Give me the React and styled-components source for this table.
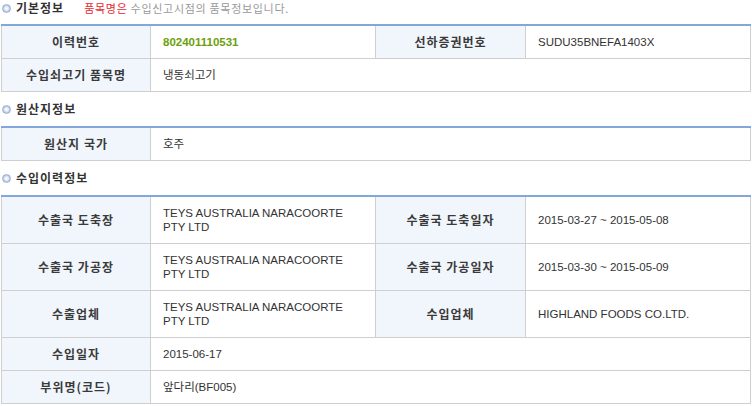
import styled, { createGlobalStyle } from "styled-components";

const GlobalStyle = createGlobalStyle`
  body {
    margin: 0;
    background: #fff;
    font-family: "Noto Sans CJK KR", "Liberation Sans", sans-serif;
    color: #333;
  }
`;

const Page = styled.div`
  width: 752px;
  padding-left: 1px;
  box-sizing: border-box;
`;

const Heading = styled.div`
  display: flex;
  align-items: center;
  height: 16px;
  margin: ${(p) => (p.$first ? "0 0 8px" : "9px 0 9px")};
`;

const Bullet = styled.span`
  width: 9px;
  height: 9px;
  margin: 0 5px 0 1px;
  border-radius: 50%;
  box-sizing: border-box;
  border: 1px solid #9fb1cf;
  background: radial-gradient(circle at 50% 50%, #ffffff 0, #e6edf8 35%, #a9bedf 75%, #8ea6cc 100%);
`;

const Title = styled.h3`
  margin: 0;
  font-size: 12px;
  font-weight: bold;
  letter-spacing: 1px;
  line-height: 16px;
  color: #333;
`;

const Note = styled.span`
  margin-left: 20px;
  font-size: 11px;
  letter-spacing: 0.7px;
  line-height: 16px;
  color: #999;

  em {
    font-style: normal;
    color: #e8262b;
  }
`;

const Table = styled.div`
  display: grid;
  grid-template-columns: 148px 224px 149px 224px;
  gap: 1px;
  width: 750px;
  box-sizing: border-box;
  padding: 0 1px 1px;
  border-top: 2px solid #83a7da;
  background: #cfcfcf;
`;

const Label = styled.div`
  display: flex;
  align-items: center;
  justify-content: center;
  padding: 9px 4px;
  background: #f1f6fd;
  font-size: 12px;
  font-weight: bold;
  letter-spacing: 1px;
  line-height: 14px;
  color: #3a3a3a;
`;

const Value = styled.div`
  display: flex;
  align-items: center;
  grid-column: span ${(p) => p.$span || 1};
  padding: 9px 20px 9px 12px;
  background: #fff;
  font-family: "Liberation Sans", "Noto Sans CJK KR", sans-serif;
  font-size: 11.5px;
  font-weight: ${(p) => (p.$highlight ? "bold" : "normal")};
  line-height: 14px;
  color: ${(p) => (p.$highlight ? "#6c9f0c" : "#333")};
`;

const sections = [
  {
    title: "기본정보",
    note: true,
    rows: [
      [
        { label: "이력번호", value: "802401110531", highlight: true },
        { label: "선하증권번호", value: "SUDU35BNEFA1403X" },
      ],
      [{ label: "수입쇠고기 품목명", value: "냉동쇠고기" }],
    ],
  },
  {
    title: "원산지정보",
    rows: [[{ label: "원산지 국가", value: "호주" }]],
  },
  {
    title: "수입이력정보",
    rows: [
      [
        { label: "수출국 도축장", value: "TEYS AUSTRALIA NARACOORTE PTY LTD" },
        { label: "수출국 도축일자", value: "2015-03-27 ~ 2015-05-08" },
      ],
      [
        { label: "수출국 가공장", value: "TEYS AUSTRALIA NARACOORTE PTY LTD" },
        { label: "수출국 가공일자", value: "2015-03-30 ~ 2015-05-09" },
      ],
      [
        { label: "수출업체", value: "TEYS AUSTRALIA NARACOORTE PTY LTD" },
        { label: "수입업체", value: "HIGHLAND FOODS CO.LTD." },
      ],
      [{ label: "수입일자", value: "2015-06-17" }],
      [{ label: "부위명(코드)", value: "앞다리(BF005)" }],
    ],
  },
];

export default function App() {
  return (
    <Page>
      <GlobalStyle />
      {sections.map((section, i) => (
        <section key={section.title}>
          <Heading $first={i === 0}>
            <Bullet />
            <Title>{section.title}</Title>
            {section.note && (
              <Note>
                <em>품목명은</em> 수입신고시점의 품목정보입니다.
              </Note>
            )}
          </Heading>
          <Table>
            {section.rows.map((row) =>
              row.map((cell) => [
                <Label key={cell.label + "-l"}>{cell.label}</Label>,
                <Value
                  key={cell.label + "-v"}
                  $span={row.length === 1 ? 3 : 1}
                  $highlight={cell.highlight}
                >
                  {cell.value}
                </Value>,
              ])
            )}
          </Table>
        </section>
      ))}
    </Page>
  );
}
